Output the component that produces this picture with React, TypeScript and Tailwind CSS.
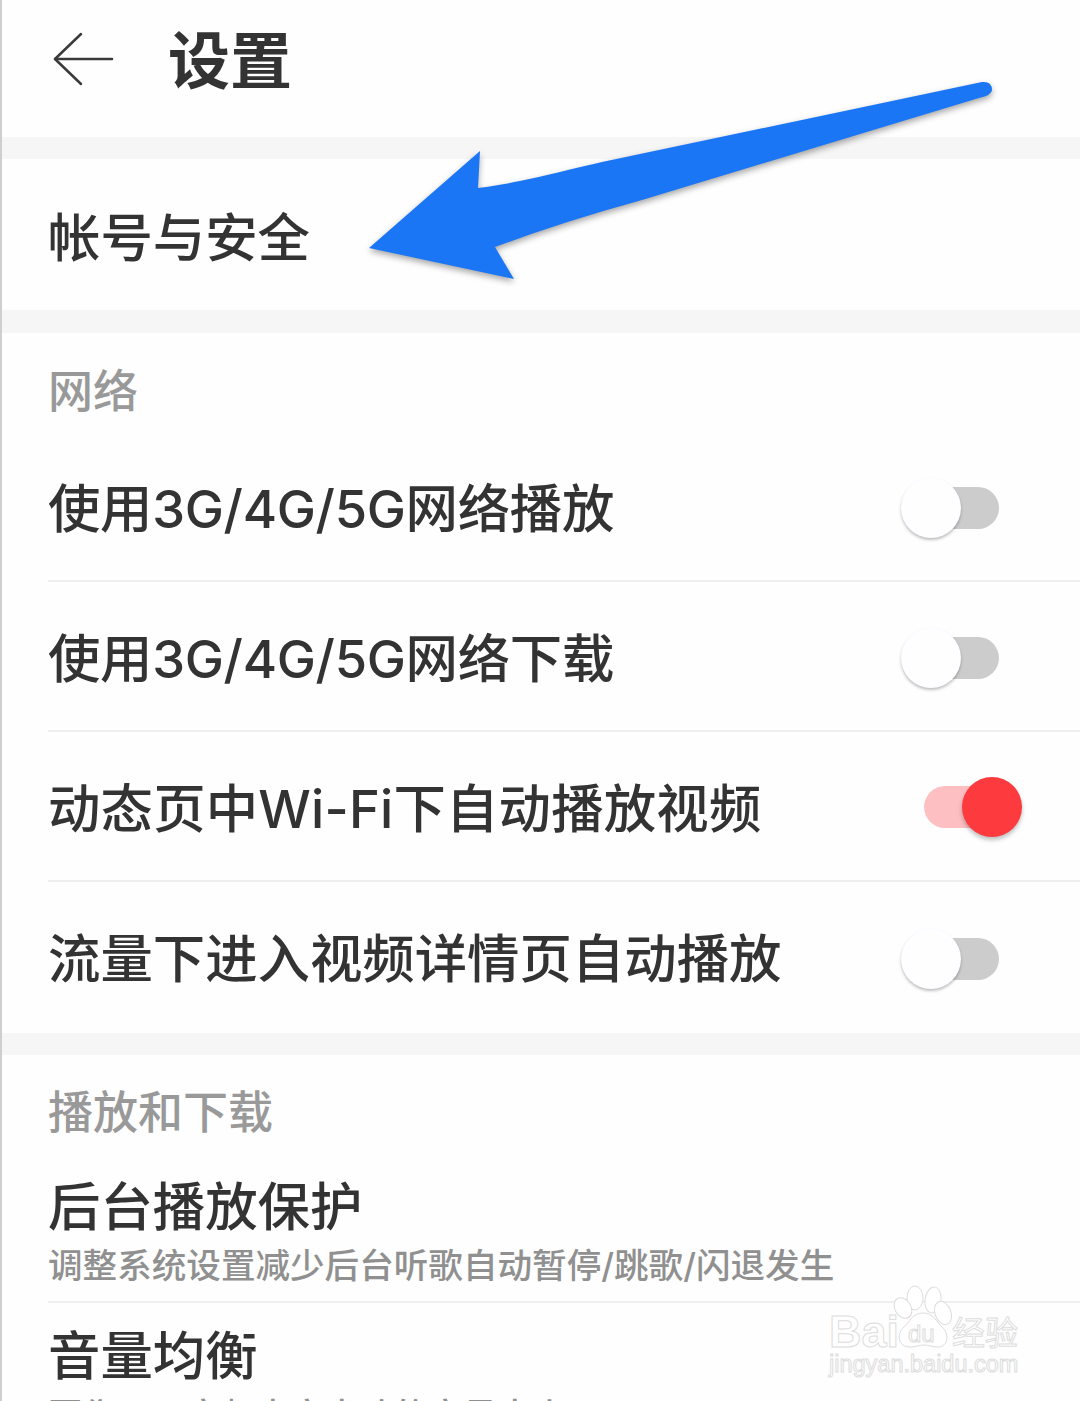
const stack = "font-['Inter','Noto_Sans_CJK_SC',sans-serif]";
const arrowPath =
  "M367 248 L478 151 L476 188 C510 184 545 175 600 162 L980 82 Q990 81 990 90 Q990 95 977 98 L640 200 Q560 222 493 247 L512 279 Z";

function Band({ h = "h-[22px]" }: { h?: string }) {
  return <div className={h + " bg-[#f6f6f6]"} />;
}

function Toggle({ on = false }: { on?: boolean }) {
  if (on) {
    return (
      <div className="mt-[1px] flex h-[60px] w-[121px] items-center justify-end">
        <div className="h-[42px] w-[76px] rounded-full bg-[#fdbfc1]" />
        <div className="z-10 -ml-[38px] h-[60px] w-[60px] shrink-0 rounded-full bg-[#fd3a3e] shadow-[0_3px_4px_rgba(0,0,0,0.25)]" />
      </div>
    );
  }
  return (
    <div className="mt-[3px] flex h-[60px] w-[121px] items-center">
      <div className="z-10 h-[60px] w-[60px] shrink-0 rounded-full bg-[#fefdff] shadow-[0_2px_3px_rgba(0,0,0,0.25)]" />
      <div className="-ml-[22px] h-[42px] w-[60px] rounded-r-full bg-[#cccccc]" />
    </div>
  );
}

function SwitchRow({ label, on, last, track = "" }: { label: string; on?: boolean; last?: boolean; track?: string }) {
  return (
    <div className={"flex items-center justify-between pr-[58px] " + (last ? "h-[151px]" : "h-[150px] border-b-2 border-[#efefef]")}>
      <span className={"text-[52.4px] font-medium leading-none text-[#333333] " + (last ? "mt-[4px] " : "mt-[7px] ") + track}>{label}</span>
      <Toggle on={on} />
    </div>
  );
}

function Arrow() {
  return (
    <svg className="absolute left-0 top-0 drop-shadow-[0_3px_3px_rgba(0,0,0,0.35)]" width="1080" height="320" viewBox="0 0 1080 320">
      <path d={arrowPath} fill="#1b76f5" />
    </svg>
  );
}

function Watermark() {
  return (
    <svg className="absolute left-[818px] top-[1280px]" width="210" height="110" viewBox="0 0 210 110">
      <g fill="#ffffff" stroke="#dddddd" strokeWidth="1">
        <ellipse cx="95" cy="18" rx="8" ry="12" />
        <ellipse cx="113" cy="20" rx="8" ry="13" transform="rotate(8 113 20)" />
        <ellipse cx="83" cy="28" rx="8" ry="11" transform="rotate(-30 83 28)" />
        <ellipse cx="123" cy="33" rx="8" ry="12" transform="rotate(-20 123 33)" />
        <path d="M103 33 C92 33 90 42 84 47 C76 54 78 67 90 67 C96 67 99 65 104 65 C109 65 112 67 118 67 C128 67 130 54 122 47 C116 42 114 33 103 33 Z" />
        <text x="9" y="67" fontFamily="Liberation Sans, sans-serif" fontSize="45" fontWeight="700">Bai</text>
        <text x="88" y="62" fontFamily="Liberation Sans, sans-serif" fontSize="24">du</text>
        <text x="132" y="65" fontFamily="Noto Sans CJK SC, sans-serif" fontSize="33">经验</text>
        <text x="9" y="92" fontFamily="Liberation Sans, sans-serif" fontSize="23.5">jingyan.baidu.com</text>
      </g>
    </svg>
  );
}

export default function App() {
  return (
    <div className={"relative h-[1401px] w-[1080px] overflow-hidden border-l-2 border-[#cfcfcf] bg-[#fefefe] " + stack}>
      <header className="flex h-[137px] items-center pl-[50px] pb-[15px]">
        <svg className="mb-[4px]" width="64" height="54" viewBox="0 0 64 54" fill="none" stroke="#3a3a3a" strokeWidth="2.5" strokeLinecap="round" strokeLinejoin="round">
          <path d="M29 2 L3 27 L29 52" />
          <path d="M3 27 H60" />
        </svg>
        <h1 className="mb-[8px] ml-[52px] font-['Noto_Sans_CJK_SC',sans-serif] text-[62px] font-bold leading-none text-[#333333]">设置</h1>
      </header>
      <Band />
      <div className="flex h-[151px] items-center pl-[46px]">
        <span className="mt-[7px] text-[52.4px] font-medium leading-none text-[#333333]">帐号与安全</span>
      </div>
      <Band h="h-[23px]" />

      <div className="flex h-[99px] items-center pl-[46px] pt-[15px]">
        <span className="mt-[3px] text-[45px] font-medium leading-none text-[#999999]">网络</span>
      </div>
      <div className="pl-[46px]">
        <SwitchRow label="使用3G/4G/5G网络播放" track="tracking-[-0.3px]" />
        <SwitchRow label="使用3G/4G/5G网络下载" track="tracking-[-0.3px]" />
        <SwitchRow label="动态页中Wi-Fi下自动播放视频" on track="tracking-[0.2px]" />
        <SwitchRow label="流量下进入视频详情页自动播放" last />
      </div>
      <Band />

      <div className="flex h-[93px] items-center pl-[46px] pt-[16px]">
        <span className="mt-[5px] text-[45px] font-medium leading-none text-[#999999]">播放和下载</span>
      </div>
      <div className="pl-[46px]">
        <div className="flex h-[155px] flex-col border-b-2 border-[#efefef] pt-[33px]">
          <span className="text-[52.4px] font-medium leading-none text-[#333333]">后台播放保护</span>
          <span className="mt-[15px] text-[34.6px] font-medium leading-none text-[#909090]">调整系统设置减少后台听歌自动暂停/跳歌/闪退发生</span>
        </div>
        <div className="flex flex-col pt-[27px]">
          <span className="text-[52.4px] font-medium leading-none text-[#333333]">音量均衡</span>
          <span className="mt-[16px] text-[34.6px] font-medium leading-none text-[#909090]">图像页面音频内容大致的音量大小</span>
        </div>
      </div>

      <Arrow />
      <Watermark />
    </div>
  );
}
